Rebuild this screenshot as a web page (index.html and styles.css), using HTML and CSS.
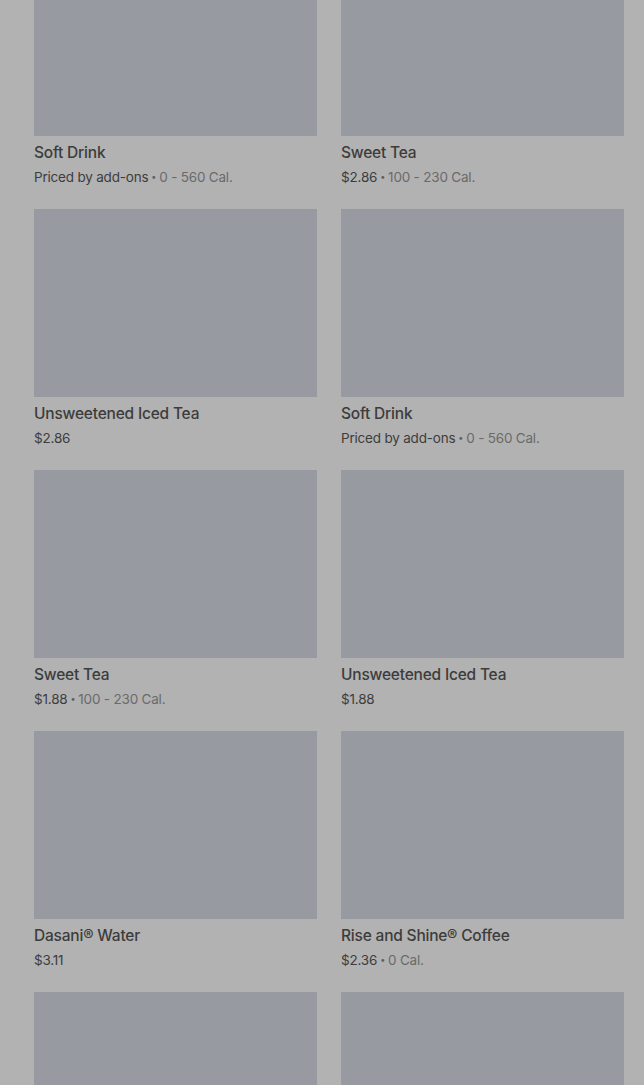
FILE: index.html
```html
<!DOCTYPE html>
<html lang="en">
<head>
<meta charset="utf-8">
<title>Menu</title>
<link rel="stylesheet" href="styles.css">
</head>
<body>
<main class="page">
  <section class="grid">
    <article class="card">
      <div class="thumb"></div>
      <h3 class="name">Soft Drink</h3>
      <p class="meta"><span class="price">Priced by add-ons</span><span class="dot">•</span><span class="cal">0 - 560 Cal.</span></p>
    </article>
    <article class="card">
      <div class="thumb"></div>
      <h3 class="name">Sweet Tea</h3>
      <p class="meta"><span class="price">$2.86</span><span class="dot">•</span><span class="cal">100 - 230 Cal.</span></p>
    </article>
    <article class="card">
      <div class="thumb"></div>
      <h3 class="name">Unsweetened Iced Tea</h3>
      <p class="meta"><span class="price">$2.86</span></p>
    </article>
    <article class="card">
      <div class="thumb"></div>
      <h3 class="name">Soft Drink</h3>
      <p class="meta"><span class="price">Priced by add-ons</span><span class="dot">•</span><span class="cal">0 - 560 Cal.</span></p>
    </article>
    <article class="card">
      <div class="thumb"></div>
      <h3 class="name">Sweet Tea</h3>
      <p class="meta"><span class="price">$1.88</span><span class="dot">•</span><span class="cal">100 - 230 Cal.</span></p>
    </article>
    <article class="card">
      <div class="thumb"></div>
      <h3 class="name">Unsweetened Iced Tea</h3>
      <p class="meta"><span class="price">$1.88</span></p>
    </article>
    <article class="card">
      <div class="thumb"></div>
      <h3 class="name">Dasani® Water</h3>
      <p class="meta"><span class="price">$3.11</span></p>
    </article>
    <article class="card">
      <div class="thumb"></div>
      <h3 class="name">Rise and Shine® Coffee</h3>
      <p class="meta"><span class="price">$2.36</span><span class="dot">•</span><span class="cal">0 Cal.</span></p>
    </article>
    <article class="card">
      <div class="thumb"></div>
    </article>
    <article class="card">
      <div class="thumb"></div>
    </article>
  </section>
</main>
</body>
</html>
```

FILE: styles.css
```css
html, body {
  margin: 0;
  padding: 0;
  background: #b2b2b2;
  overflow: hidden;
}

body {
  font-family: Inter, "Noto Sans", "Liberation Sans", sans-serif;
  color: #3a3a3a;
}

.page {
  padding: 0 20px 0 34px;
}

.grid {
  margin-top: -52px;
  display: grid;
  grid-template-columns: 283px 283px;
  column-gap: 24px;
  row-gap: 22px;
}

.card {
  display: flex;
  flex-direction: column;
}

.thumb {
  height: 188px;
  background: #979aa1;
}

.name {
  margin: 7px 0 0;
  font-size: 15.5px;
  line-height: 20px;
  font-weight: 500;
  color: #3c3c3c;
  letter-spacing: -0.2px;
}

.meta {
  margin: 4px 0 0;
  font-size: 13.5px;
  line-height: 20px;
  display: flex;
  align-items: center;
  letter-spacing: -0.2px;
}

.price {
  color: #3d3d3d;
}

.dot {
  color: #5e5e5e;
  font-size: 9px;
  margin: 0 3px;
}

.cal {
  color: #6a6a6a;
}
```
